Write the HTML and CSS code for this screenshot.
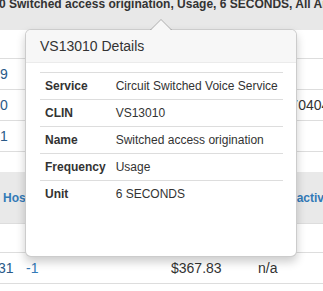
FILE: index.html
```html
<!DOCTYPE html>
<html lang="en">
<head>
  <meta charset="UTF-8">
  <title>Service Details</title>
  <link rel="stylesheet" href="styles.css">
</head>
<body>

  <div class="band">
    <p class="band-text">0 Switched access origination, Usage, 6 SECONDS, All Areas</p>
  </div>

  <div class="rows">
    <div class="row row-first"></div>
    <div class="row"><span class="cell-left link-dark">9</span></div>
    <div class="row"><span class="cell-left link-dark">0</span><span class="cell-right">20170404</span></div>
    <div class="row"><span class="cell-left link-dark">1</span></div>
  </div>

  <div class="grid">
    <div class="grid-head">
      <span class="head-left">Host</span>
      <span class="head-right">Inactive</span>
    </div>
    <div class="grid-row grid-blank"></div>
    <div class="grid-row">
      <span class="col-a link-dark">31</span>
      <span class="col-b link">-1</span>
      <span class="col-c">$367.83</span>
      <span class="col-d">n/a</span>
    </div>
  </div>

  <div class="popover">
    <h3 class="popover-title">VS13010 Details</h3>
    <div class="popover-content">
      <table class="details">
        <tr>
          <th>Service</th>
          <td>Circuit Switched Voice Service</td>
        </tr>
        <tr>
          <th>CLIN</th>
          <td>VS13010</td>
        </tr>
        <tr>
          <th>Name</th>
          <td>Switched access origination</td>
        </tr>
        <tr>
          <th>Frequency</th>
          <td>Usage</td>
        </tr>
        <tr>
          <th>Unit</th>
          <td>6 SECONDS</td>
        </tr>
      </table>
    </div>
  </div>

</body>
</html>
```

FILE: styles.css
```css
body {
  margin: 0;
  overflow: hidden;
  font-family: "Liberation Sans", Arial, sans-serif;
  color: #333;
  background-color: #fff;
}

.link {
  color: #337ab7;
}

.link-dark {
  color: #2a5a88;
}

/* top selected row */
.band {
  height: 30px;
  overflow: hidden;
  background-color: #e8e8e8;
}

.band-text {
  margin: -4px 0 0 -1px;
  font-size: 12px;
  font-weight: bold;
  line-height: 17px;
  white-space: nowrap;
}

/* rows behind the popover */
.rows {
  font-size: 14px;
  border-bottom: 1px solid #ddd;
}

.row {
  display: flex;
  justify-content: space-between;
  align-items: center;
  height: 30px;
  border-top: 1px solid #ddd;
  white-space: nowrap;
}

.row-first {
  height: 28px;
  border-top: none;
}

.cell-left {
  width: 40px;
}

.cell-right {
  width: 56px;
}

.grid {
  margin-top: 20px;
  font-size: 14px;
}

.grid-head {
  display: flex;
  justify-content: space-between;
  align-items: center;
  height: 51px;
  background-color: #e9e9e9;
  border-bottom: 1px solid #ddd;
  font-size: 12px;
  font-weight: bold;
  color: #337ab7;
  white-space: nowrap;
}

.head-left {
  padding-left: 3px;
}

.head-right {
  width: 37px;
}

.grid-row {
  display: flex;
  align-items: center;
  height: 30px;
  border-bottom: 1px solid #ddd;
  white-space: nowrap;
}

.grid-blank {
  height: 28px;
}

.col-a {
  width: 28px;
  margin-left: -2px;
}

.col-b {
  width: 145px;
}

.col-c {
  width: 87px;
}

/* popover */
.popover {
  position: absolute;
  top: 29px;
  left: 25px;
  width: 272px;
  box-sizing: border-box;
  background-color: #fff;
  border: 1px solid rgba(0, 0, 0, 0.2);
  border-radius: 6px;
  box-shadow: 0 5px 10px rgba(0, 0, 0, 0.2);
}

.popover::before,
.popover::after {
  content: "";
  position: absolute;
  left: 50%;
  width: 0;
  height: 0;
  border-style: solid;
  border-color: transparent;
  border-top-width: 0;
}

.popover::before {
  top: -11px;
  margin-left: -11px;
  border-width: 0 11px 11px;
  border-bottom-color: rgba(0, 0, 0, 0.25);
}

.popover::after {
  top: -10px;
  margin-left: -10px;
  border-width: 0 10px 10px;
  border-bottom-color: #f7f7f7;
}

.popover-title {
  margin: 0;
  padding: 8px 14px;
  font-size: 14px;
  font-weight: normal;
  line-height: 16px;
  background-color: #f7f7f7;
  border-bottom: 1px solid #ebebeb;
  border-radius: 5px 5px 0 0;
}

.popover-content {
  padding: 9px 14px 49px;
}

.details {
  width: 100%;
  border-collapse: collapse;
  font-size: 12px;
  line-height: 16px;
}

.details th,
.details td {
  padding: 5px;
  border-top: 1px solid #ddd;
  text-align: left;
  white-space: nowrap;
}

.details td {
  width: 100%;
}
```
